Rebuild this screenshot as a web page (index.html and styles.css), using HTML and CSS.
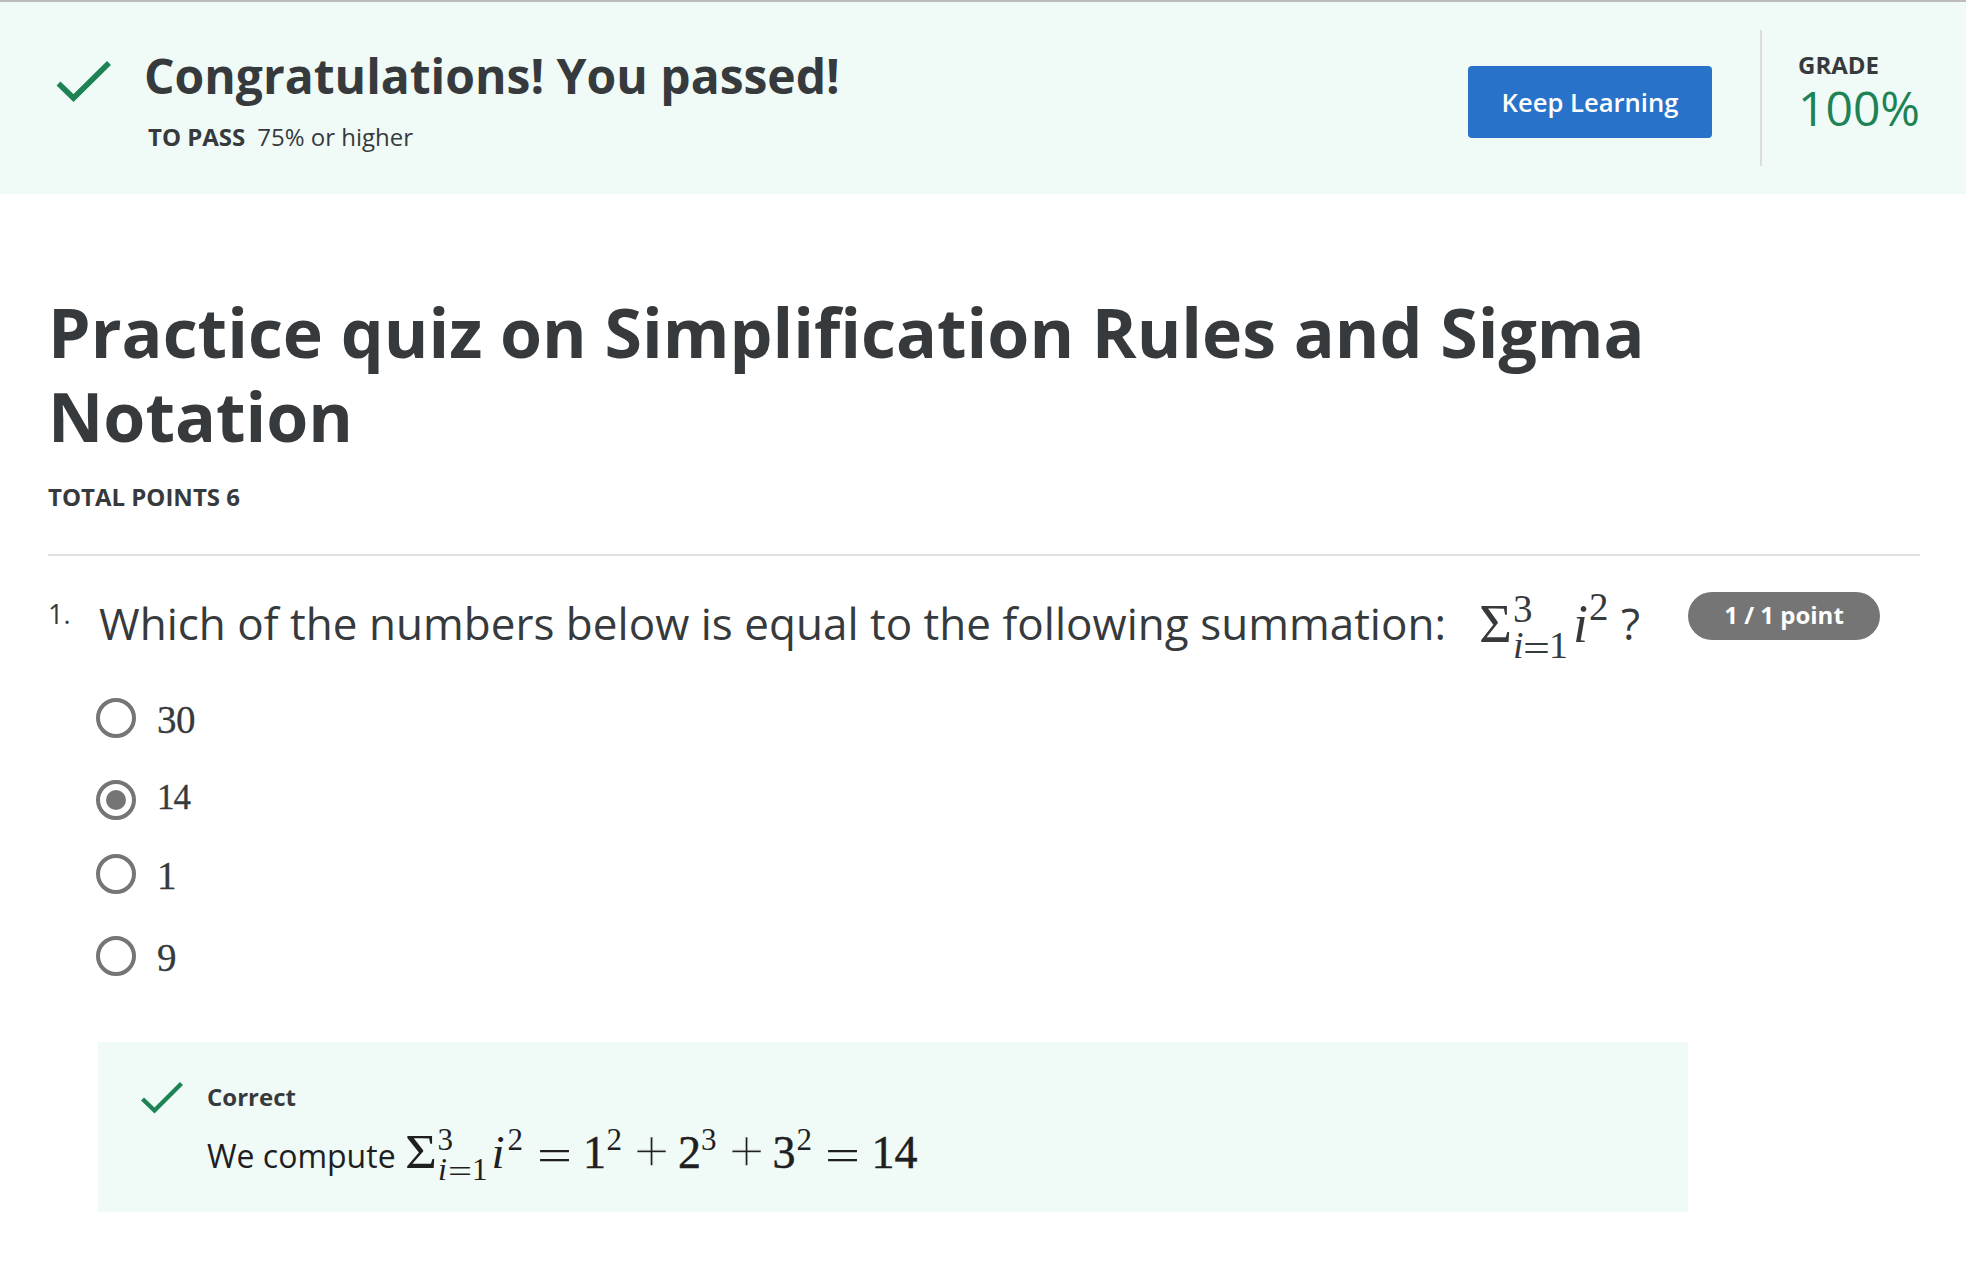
FILE: index.html
```html
<!DOCTYPE html>
<html lang="en">
<head>
<meta charset="utf-8">
<title>Practice quiz on Simplification Rules and Sigma Notation</title>
<link rel="stylesheet" href="styles.css">
</head>
<body>
<header class="banner">
  <svg class="banner-check" width="56" height="44" viewBox="0 0 56 44"><path d="M2.5 23.5 L17.5 38 L53 3" fill="none" stroke="#1d8354" stroke-width="5.6"/></svg>
  <div class="banner-text">
    <h2 class="banner-title">Congratulations! You passed!</h2>
    <p class="banner-sub"><b>TO PASS</b><span>75% or higher</span></p>
  </div>
  <button class="keep" type="button">Keep Learning</button>
  <div class="grade">
    <div class="grade-label">GRADE</div>
    <div class="grade-value">100%</div>
  </div>
</header>
<main class="page">
  <h1 class="title">Practice quiz on Simplification Rules and Sigma Notation</h1>
  <p class="points">TOTAL POINTS 6</p>
  <hr class="rule">
  <section class="question">
    <div class="number">1.</div>
    <div class="body">
      <div class="prompt">
        <span class="prompt-text">Which of the numbers below is equal to the following summation:</span>
        <svg class="formula" width="170" height="86" viewBox="1474 586 170 86">
          <text x="1479" y="642" font-size="55" textLength="33" lengthAdjust="spacingAndGlyphs">Σ</text>
          <text x="1513" y="622" font-size="39">3</text>
          <text x="1513" y="658" font-size="38" class="it">i</text>
          <text x="1523" y="661" font-size="38" textLength="27" lengthAdjust="spacingAndGlyphs">=</text>
          <text x="1549" y="658" font-size="38">1</text>
          <text x="1573" y="642" font-size="54" class="it">i</text>
          <text x="1589" y="620" font-size="39">2</text>
          <text x="1621" y="640" font-size="44" class="sans">?</text>
        </svg>
      </div>
      <ul class="options">
        <li class="option first"><span class="radio"></span><span class="value">30</span></li>
        <li class="option second"><span class="radio on"></span><span class="value small">14</span></li>
        <li class="option third"><span class="radio"></span><span class="value">1</span></li>
        <li class="option fourth"><span class="radio"></span><span class="value">9</span></li>
      </ul>
      <div class="feedback">
        <svg class="feedback-check" width="42" height="34" viewBox="0 0 42 34"><path d="M1.5 18 L13.5 29.5 L40.5 2.5" fill="none" stroke="#1d8354" stroke-width="4.4"/></svg>
        <div class="feedback-body">
          <div class="feedback-title">Correct</div>
          <div class="feedback-text">
            <span class="compute">We compute</span>
            <svg class="formula dark" width="524" height="68" viewBox="400 1122 524 68">
              <text x="405" y="1168" font-size="49" textLength="32" lengthAdjust="spacingAndGlyphs">Σ</text>
              <text x="437.5" y="1150" font-size="31">3</text>
              <text x="438" y="1180" font-size="32" class="it">i</text>
              <text x="448" y="1182" font-size="32" textLength="24" lengthAdjust="spacingAndGlyphs">=</text>
              <text x="472" y="1180" font-size="31">1</text>
              <text x="491.5" y="1168" font-size="47" class="it">i</text>
              <text x="507.5" y="1150" font-size="31">2</text>
              <text x="537" y="1170" font-size="44" textLength="35" lengthAdjust="spacingAndGlyphs">=</text>
              <text x="583" y="1168" font-size="46" class="strong">1</text>
              <text x="606.5" y="1150" font-size="31">2</text>
              <text x="633.5" y="1173" font-size="64" class="thin">+</text>
              <text x="678" y="1168" font-size="46" class="strong">2</text>
              <text x="701" y="1150" font-size="31">3</text>
              <text x="728.5" y="1173" font-size="64" class="thin">+</text>
              <text x="772.5" y="1168" font-size="46" class="strong">3</text>
              <text x="796.5" y="1150" font-size="31">2</text>
              <text x="825" y="1170" font-size="44" textLength="35" lengthAdjust="spacingAndGlyphs">=</text>
              <text x="871.5" y="1168" font-size="46" class="strong">14</text>
            </svg>
          </div>
        </div>
      </div>
    </div>
    <div class="badge">1 / 1 point</div>
  </section>
</main>
</body>
</html>
```
FILE: styles.css
```css
* { box-sizing: border-box; }
body { margin: 0; background: #fff; color: #373a3c; font-family: "Open Sans", "Noto Sans", sans-serif; }
h1, h2, p, ul { margin: 0; padding: 0; }

.banner { display: flex; align-items: flex-start; height: 194px; border-top: 2px solid #bbb; background: #f0faf7; padding: 0 46px 0 56px; }
.banner-check { margin-top: 58px; flex: none; }
.banner-text { margin: 42px 0 0 32px; flex: 1; }
.banner-title { font-size: 48px; line-height: 64px; font-weight: 700; white-space: nowrap; }
.banner-sub { display: flex; gap: 12px; margin: 13px 0 0 4px; font-size: 24px; line-height: 32px; }
.keep { width: 244px; height: 72px; margin-top: 64px; border: 0; border-radius: 4px; background: #2872c9; color: #fff; font: 600 25.6px/72px "Open Sans", sans-serif; padding: 1px 0 0; }
.grade { height: 136px; width: 160px; margin: 28px 0 0 48px; padding: 19px 0 0 36px; border-left: 2px solid #ddd; white-space: nowrap; }
.grade-label { font-size: 24px; line-height: 32px; font-weight: 700; }
.grade-value { font-size: 48px; line-height: 56px; margin-top: -1px; color: #1d8354; }

.page { padding: 96px 46px 0 48px; }
.title { font-size: 68px; line-height: 84px; font-weight: 700; max-width: 1700px; }
.points { margin-top: 23px; font-size: 24px; line-height: 32px; font-weight: 700; }
.rule { height: 2px; border: 0; margin: 41px 0 0; background: #e0e0e0; }

.question { display: flex; align-items: flex-start; }
.number { width: 50px; flex: none; margin-top: 38px; font-size: 27px; line-height: 40px; }
.body { width: 1590px; flex: none; }
.prompt { display: flex; align-items: flex-start; height: 110px; padding-top: 30px; }
.prompt-text { width: 1376px; flex: none; padding-left: 1px; white-space: nowrap; font-size: 44px; line-height: 74px; letter-spacing: 0.02px; }
.formula { flex: none; fill: #373a3c; font-family: "Liberation Serif", serif; }
.dark { fill: #1f1f1f; }
.strong { stroke: #1f1f1f; stroke-width: 0.5px; }
/* operators are trimmed by an outline in the panel colour */
.thin { stroke: #f0faf7; stroke-width: 1.4px; }
.it { font-style: italic; }
.sans { font-family: "Open Sans", sans-serif; }
.badge { width: 192px; height: 48px; flex: none; margin-top: 36px; border-radius: 24px; background: #757575; color: #fff; font-size: 24px; line-height: 46px; font-weight: 700; text-align: center; }

.options { list-style: none; margin: 32px 0 0 -2px; }
.option { display: flex; align-items: flex-start; height: 82px; gap: 21px; }
.option.second { height: 74px; }
.option.fourth { height: 106px; }
.radio { width: 40px; height: 40px; border: 4px solid #757575; border-radius: 50%; display: flex; align-items: center; justify-content: center; }
.radio.on::after { content: ""; width: 20px; height: 20px; border-radius: 50%; background: #757575; }
.value { font-family: "Liberation Serif", serif; font-size: 39px; line-height: 44px; letter-spacing: -0.5px; -webkit-text-stroke: 0.3px #373a3c; }
.value.small { font-size: 35px; line-height: 35px; letter-spacing: -1px; }

.feedback { display: flex; align-items: flex-start; height: 170px; background: #f0faf7; padding: 38px 0 0 43px; }
.feedback-check { margin-top: 1px; }
.feedback-body { margin-left: 24px; }
.feedback-title { font-size: 24px; line-height: 34px; font-weight: 700; }
.feedback-text { display: flex; margin-top: 8px; color: #1f1f1f; }
.compute { width: 193px; flex: none; font-size: 32px; line-height: 68px; white-space: nowrap; }
```
